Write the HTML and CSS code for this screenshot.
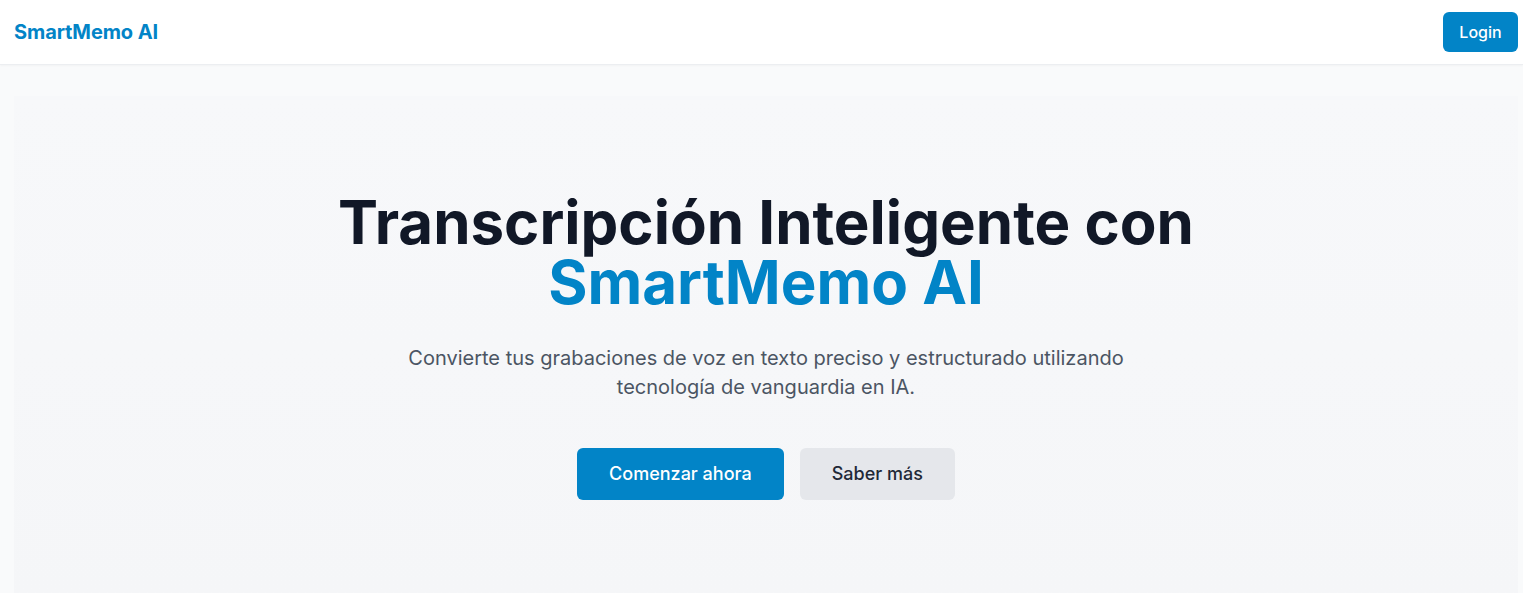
FILE: index.html
```html
<!DOCTYPE html>
<html lang="es">
<head>
<meta charset="utf-8">
<title>SmartMemo AI</title>
<link rel="stylesheet" href="styles.css">
</head>
<body>
<header class="topbar">
  <a class="brand" href="#">SmartMemo AI</a>
  <button class="btn btn-login">Login</button>
</header>
<main class="page">
  <section class="hero">
    <h1 class="hero-title">Transcripción Inteligente con<br><span class="accent">SmartMemo AI</span></h1>
    <p class="hero-sub">Convierte tus grabaciones de voz en texto preciso y estructurado utilizando tecnología de vanguardia en IA.</p>
    <div class="hero-actions">
      <button class="btn btn-primary">Comenzar ahora</button>
      <button class="btn btn-secondary">Saber más</button>
    </div>
  </section>
</main>
</body>
</html>
```
FILE: styles.css
```css
* { box-sizing: border-box; }
html, body { margin: 0; padding: 0; }
body {
  font-family: Inter, "Noto Sans", "Liberation Sans", sans-serif;
  background: #f9fafb;
  color: #111827;
  min-height: 593px;
}
.topbar {
  height: 65px;
  background: #ffffff;
  border-bottom: 1px solid #eceef1;
  box-shadow: 0 1px 2px rgba(0,0,0,0.03);
  display: flex;
  align-items: center;
  justify-content: space-between;
  padding: 0 5px 0 14px;
}
.brand {
  font-size: 20px;
  font-weight: 700;
  color: #0284c7;
  text-decoration: none;
  letter-spacing: -0.1px;
}
.btn {
  font-family: inherit;
  border: none;
  cursor: pointer;
  border-radius: 6px;
  font-weight: 500;
}
.btn-login {
  background: #0284c7;
  color: #ffffff;
  font-size: 16px;
  line-height: 24px;
  padding: 8px 16px;
  width: 75px;
  height: 40px;
  margin-top: -1px;
}
.page {
  padding: 31px 5px 0 14px;
}
.hero {
  background: linear-gradient(180deg, #f7f8fa 0%, #f5f6f8 100%);
  padding: 96px 16px 100px;
  display: flex;
  flex-direction: column;
  align-items: center;
  text-align: center;
}
.hero-title {
  margin: 0;
  font-size: 60px;
  line-height: 60px;
  font-weight: 700;
  color: #111827;
  letter-spacing: 0;
}
.accent { color: #0284c7; }
.hero-sub {
  margin: 32px 0 0;
  max-width: 768px;
  font-size: 20px;
  line-height: 29px;
  color: #4b5563;
}
.hero-actions {
  margin-top: 46px;
  display: flex;
  gap: 16px;
}
.btn-primary, .btn-secondary {
  font-size: 18px;
  line-height: 28px;
  padding: 12px 32px;
  height: 52px;
}
.btn-primary { background: #0284c7; color: #ffffff; }
.btn-secondary { background: #e5e7eb; color: #1f2937; }
```
